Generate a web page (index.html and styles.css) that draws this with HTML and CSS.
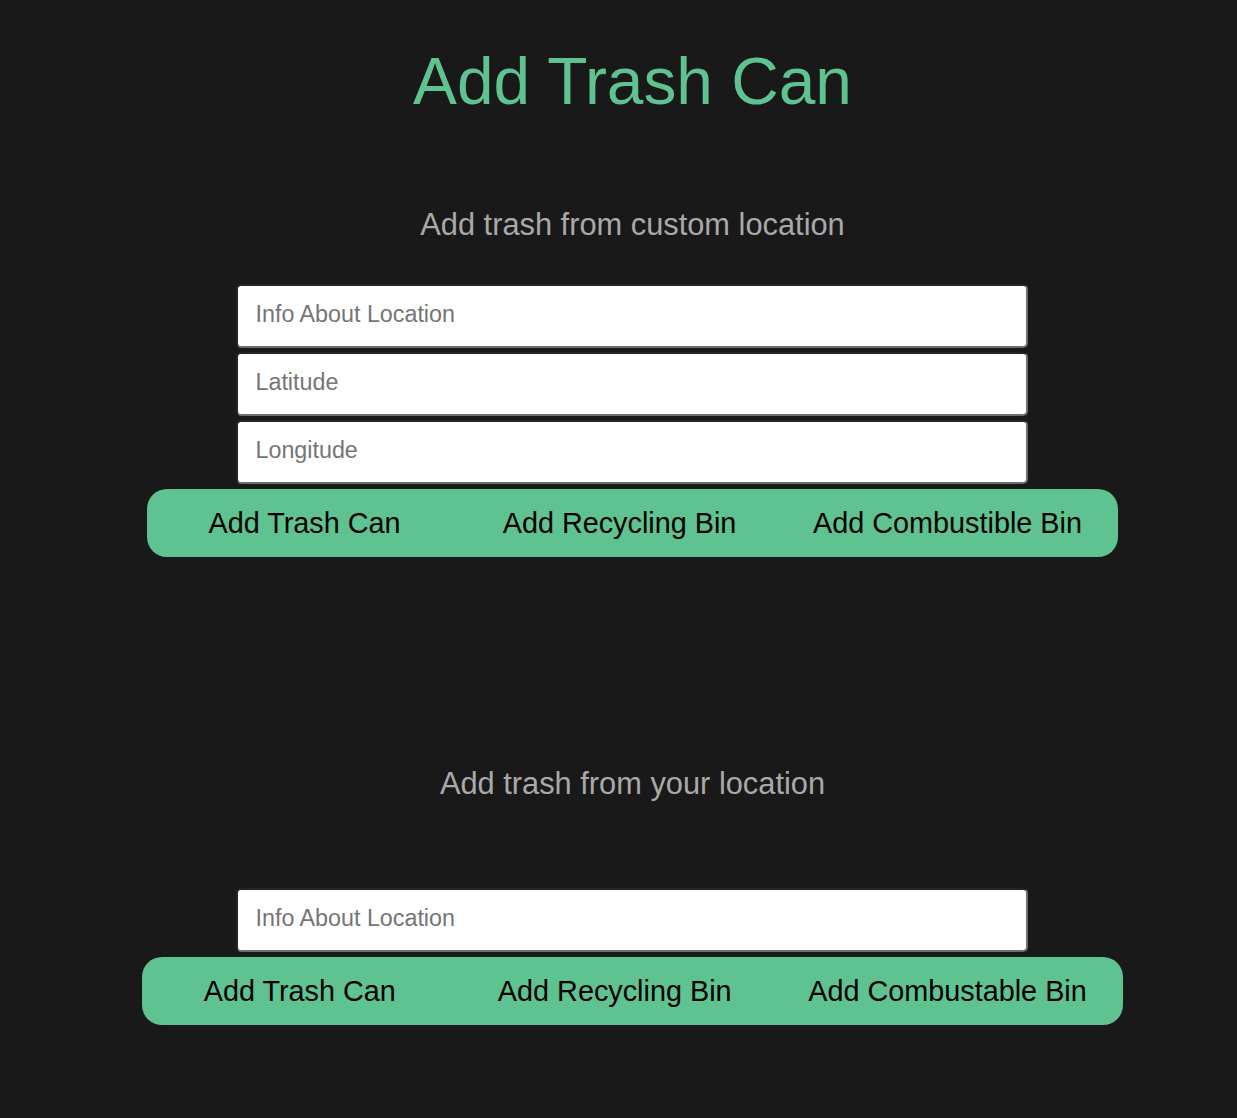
FILE: index.html
```html
<!DOCTYPE html>
<html lang="en">
<head>
<meta charset="utf-8">
<title>Add Trash Can</title>
<link rel="stylesheet" href="styles.css">
</head>
<body>
<main class="page">
  <h1 class="title">Add Trash Can</h1>

  <section class="section section-custom">
    <h2 class="subtitle">Add trash from custom location</h2>
    <form class="form form-custom">
      <input class="field" type="text" placeholder="Info About Location">
      <input class="field" type="text" placeholder="Latitude">
      <input class="field" type="text" placeholder="Longitude">
      <div class="actions actions-custom">
        <button class="action" type="button">Add Trash Can</button>
        <button class="action" type="button">Add Recycling Bin</button>
        <button class="action" type="button">Add Combustible Bin</button>
      </div>
    </form>
  </section>

  <section class="section section-own">
    <h2 class="subtitle">Add trash from your location</h2>
    <form class="form form-own">
      <input class="field" type="text" placeholder="Info About Location">
      <div class="actions actions-own">
        <button class="action" type="button">Add Trash Can</button>
        <button class="action" type="button">Add Recycling Bin</button>
        <button class="action" type="button">Add Combustable Bin</button>
      </div>
    </form>
  </section>
</main>
</body>
</html>
```

FILE: styles.css
```css
html, body {
  margin: 0;
  padding: 0;
  background: #191919;
}

body {
  font-family: "Liberation Sans", Arial, sans-serif;
  min-height: 1118px;
  overflow: hidden;
}

.page {
  padding-left: 28px;
  display: flex;
  flex-direction: column;
  align-items: center;
}

.title {
  margin: 43px 0 0;
  font-size: 65.8px;
  line-height: 76px;
  font-weight: 400;
  color: #5fc291;
}

.section {
  display: flex;
  flex-direction: column;
  align-items: center;
}

.section-custom {
  margin-top: 88px;
}

.section-own {
  margin-top: 209px;
}

.subtitle {
  margin: 0;
  font-size: 30.8px;
  line-height: 36px;
  font-weight: 400;
  color: #a9a9a9;
}

.form {
  display: flex;
  flex-direction: column;
  align-items: center;
  gap: 4px;
}

.form-custom {
  margin-top: 41px;
}

.actions-custom {
  margin-top: 1px;
}

.form-own {
  margin-top: 86px;
  gap: 5px;
}

.field {
  box-sizing: border-box;
  width: 792px;
  height: 64px;
  margin: 0;
  padding: 0 17px 4px;
  border-width: 2px;
  border-style: solid;
  border-color: #262626 #6f6f6f #6f6f6f #262626;
  border-radius: 5px;
  background: #ffffff;
  font-family: "Liberation Sans", Arial, sans-serif;
  font-size: 23.3px;
  color: #333;
  outline: none;
}

.field::placeholder {
  color: #757575;
  opacity: 1;
}

.actions {
  display: flex;
  background: #5fc291;
  border-radius: 20px;
}

.action {
  box-sizing: border-box;
  min-width: 315px;
  margin: 0;
  padding: 17px 36px;
  border: 0;
  background: transparent;
  font-family: "Liberation Sans", Arial, sans-serif;
  font-size: 28.8px;
  line-height: 34px;
  color: #000;
  white-space: nowrap;
  cursor: pointer;
}
```
